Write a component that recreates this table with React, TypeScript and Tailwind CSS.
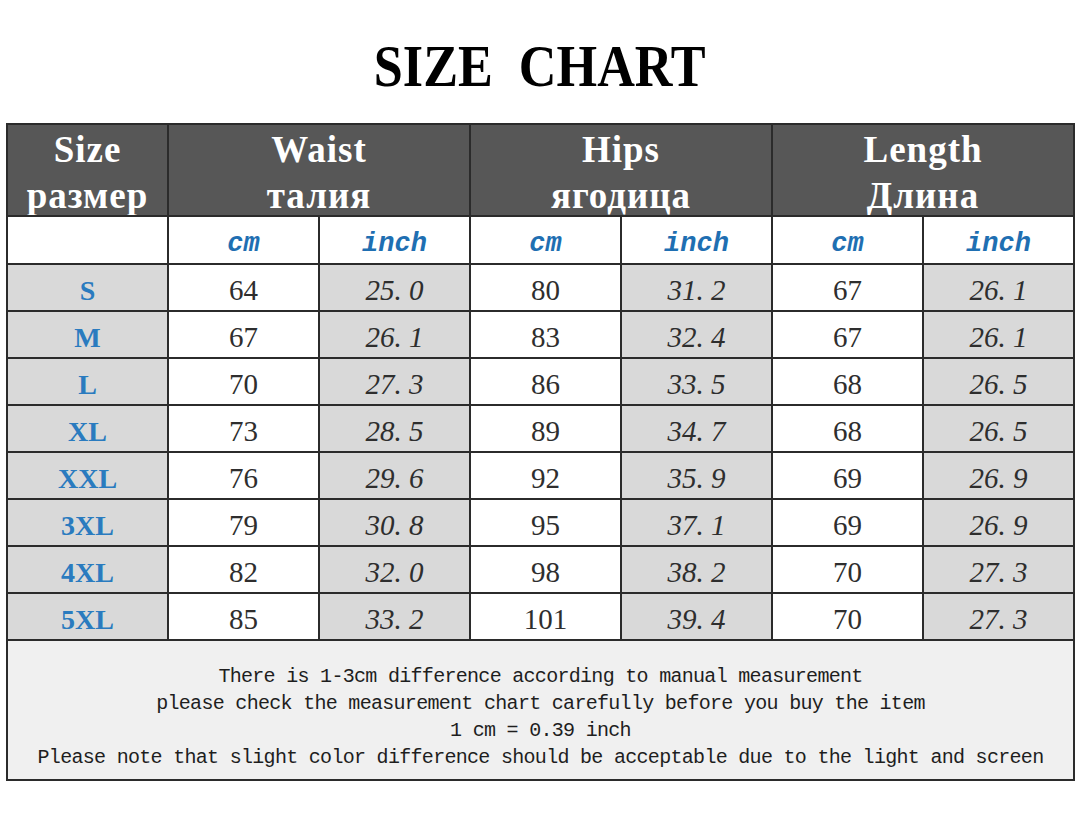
import React from "react";

const rows: [string, string, string, string, string, string, string][] = [
  ["S", "64", "25. 0", "80", "31. 2", "67", "26. 1"],
  ["M", "67", "26. 1", "83", "32. 4", "67", "26. 1"],
  ["L", "70", "27. 3", "86", "33. 5", "68", "26. 5"],
  ["XL", "73", "28. 5", "89", "34. 7", "68", "26. 5"],
  ["XXL", "76", "29. 6", "92", "35. 9", "69", "26. 9"],
  ["3XL", "79", "30. 8", "95", "37. 1", "69", "26. 9"],
  ["4XL", "82", "32. 0", "98", "38. 2", "70", "27. 3"],
  ["5XL", "85", "33. 2", "101", "39. 4", "70", "27. 3"],
];

const serif = "font-['Liberation_Serif','Times_New_Roman',serif]";
const mono = "font-['Liberation_Mono','Courier_New',monospace]";

function HeadCell({ a, b, span }: { a: string; b: string; span?: boolean }) {
  return (
    <div
      className={`${span ? "col-span-2" : ""} h-[90px] bg-[#575757] overflow-hidden flex flex-col items-center justify-end`}
    >
      <div
        className={`${serif} font-bold text-white text-[37px] tracking-[1px] leading-[46px] text-center translate-y-[4px]`}
      >
        <div>{a}</div>
        <div>{b}</div>
      </div>
    </div>
  );
}

function Unit({ t }: { t: string }) {
  return (
    <div className="h-[46px] bg-white flex items-center justify-center">
      <span className={`${mono} italic font-bold text-[27px] text-[#1f6fb2] leading-none translate-y-[4px]`}>{t}</span>
    </div>
  );
}

export default function App() {
  return (
    <div className="w-[1080px] h-[834px] bg-white">
      <div className="h-[123px] flex items-center justify-center pt-[9px]">
        <h1 className={`${serif} font-bold text-[60px] leading-none text-black scale-x-[0.87] whitespace-pre`}>
          SIZE  CHART
        </h1>
      </div>
      <div className="ml-[6px] w-[1069px] bg-[#2b2b2b] p-[2px] grid grid-cols-[159px_repeat(6,149px)] gap-[2px]">
        <HeadCell a="Size" b="размер" />
        <HeadCell a="Waist" b="талия" span />
        <HeadCell a="Hips" b="ягодица" span />
        <HeadCell a="Length" b="Длина" span />

        <div className="h-[46px] bg-white" />
        <Unit t="cm" />
        <Unit t="inch" />
        <Unit t="cm" />
        <Unit t="inch" />
        <Unit t="cm" />
        <Unit t="inch" />

        {rows.map((r) => (
          <React.Fragment key={r[0]}>
            <div className="h-[45px] bg-[#d9d9d9] flex items-center justify-center">
              <span className={`${serif} text-[28px] text-[#2a7bbf] leading-none font-semibold translate-y-[3px]`}>{r[0]}</span>
            </div>
            {r.slice(1).map((v, i) => (
              <div
                key={i}
                className={`h-[45px] flex items-center justify-center ${i % 2 === 0 ? "bg-white" : "bg-[#d9d9d9]"}`}
              >
                <span
                  className={`${serif} text-[29px] leading-none text-[#2e2e2e] translate-y-[3px] ${i % 2 === 1 ? "italic whitespace-pre" : ""}`}
                >
                  {v}
                </span>
              </div>
            ))}
          </React.Fragment>
        ))}

        <div className="col-span-7 h-[138px] bg-[#f0f0f0] flex flex-col items-center justify-center pt-[13px]">
          <div className={`${mono} text-[20px] tracking-[-0.7px] leading-[27px] text-[#1e1e1e] text-center whitespace-pre`}>
            <div>There is 1-3cm difference according to manual measurement</div>
            <div>please check the measurement chart carefully before you buy the item</div>
            <div>1 cm = 0.39 inch</div>
            <div>Please note that slight color difference should be acceptable due to the light and screen</div>
          </div>
        </div>
      </div>
    </div>
  );
}
